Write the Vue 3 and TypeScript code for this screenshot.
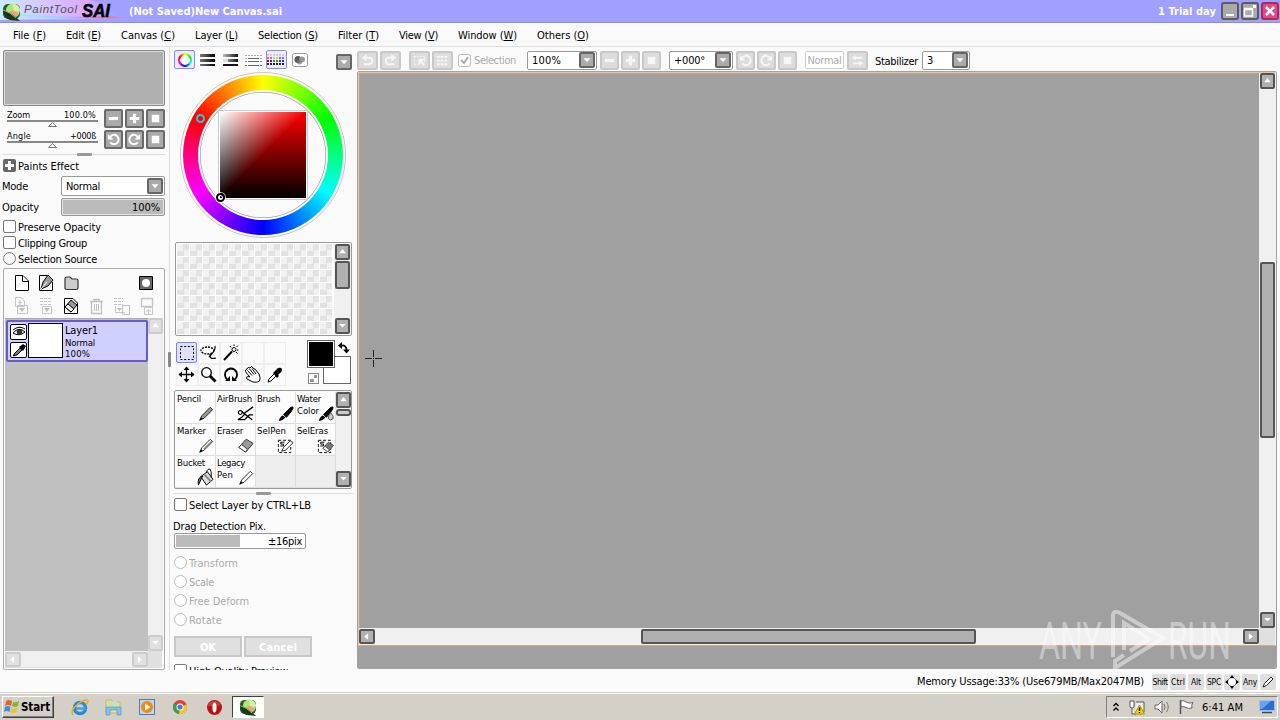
<script setup lang="ts">
import type { Directive } from 'vue'

// Spreads or tightens a label so it takes exactly the given number of pixels.
const vFit: Directive<HTMLElement, number> = {
  mounted(el, binding) {
    const natural = el.getBoundingClientRect().width
    const count = (el.textContent ?? '').length
    if (count > 0 && natural > 0) {
      el.style.letterSpacing = `${(binding.value - natural) / count}px`
    }
  },
}

interface MenuItem { name: string; key: string; w: number }
const menus: MenuItem[] = [
  { name: 'File', key: 'F', w: 33 },
  { name: 'Edit', key: 'E', w: 35 },
  { name: 'Canvas', key: 'C', w: 54 },
  { name: 'Layer', key: 'L', w: 43 },
  { name: 'Selection', key: 'S', w: 60 },
  { name: 'Filter', key: 'T', w: 41 },
  { name: 'View', key: 'V', w: 39 },
  { name: 'Window', key: 'W', w: 59 },
  { name: 'Others', key: 'O', w: 52 },
]

const g = (d: string, extra = '') => `<path d="${d}" fill="none" stroke="currentColor" ${extra}/>`
const f = (d: string, extra = 'fill="currentColor"') => `<path d="${d}" ${extra}/>`

const up = f('M8 5L12 10H4Z')
const down = f('M4 6H12L8 10.500Z')
const left = f('M10 4V12L5 8Z')
const right = f('M6 4V12L11 8Z')
const minus = f('M3 6.300H13V9.700H3Z')
const plus = f('M6.300 3H9.700V6.300H13V9.700H9.700V13H6.300V9.700H3V6.300H6.300Z')
const square = f('M4 4H12V12H4Z')
const ccw = g('M4.5 5A5 5 0 1 1 4.5 11', 'stroke-width="2"') + f('M2 2V8H8Z')
const cw = g('M11.5 5A5 5 0 1 0 11.5 11', 'stroke-width="2"') + f('M14 2V8H8Z')
const undo = g('M6 5H10Q13 5 13 8.500Q13 12 9 12H4', 'stroke-width="2"') + f('M2 5L7 1V9Z')
const redo = g('M10 5H6Q3 5 3 8.500Q3 12 7 12H12', 'stroke-width="2"') + f('M14 5L9 1V9Z')
const deselect = g('M2.500 3.500H13.500V11M2.500 3.500V12.500H8', 'stroke-dasharray="2 1"') + g('M8 7L13 13M8 12V7H13', 'stroke-width="2"')
const hideSel = g('M2 4H14M2 8H14M2 12H14', 'stroke-width="2" stroke-dasharray="3 1"')
const flip = g('M3 5H13M3 11H13', 'stroke-width="2"') + f('M2 5L6 2V8ZM14 11L10 8V14Z')

const navRows = [
  { label: 'Zoom', value: '100.0%', lw: 23, vw: 32, icons: [minus, plus, square] },
  { label: 'Angle', value: '+000ß', lw: 24, vw: 26, icons: [ccw, cw, square] },
]

const page = '<path d="M4.500 2.500H12L17.500 8V17.500H4.500Z" fill="#fff" stroke="#000"/><path d="M11.500 3V8.500H17" fill="#fff" stroke="#000"/>'
const penPage = '<path d="M3.500 2.500H11M16.500 9V17.500H3.500V2.500" fill="none" stroke="#000"/><path d="M5 16L7 9L12 2L17 7L12 13Z" fill="#999" stroke="#000"/><path d="M5 16L11 9" stroke="#fff"/>'
const folder = '<path d="M4 6Q4 4 6 4H9L11 6H15Q17 6 17 8V15Q17 16.500 15 16.500H6Q4 16.500 4 15Z" fill="#ccc" stroke="#333" stroke-width="1.200"/>'
const mask = '<path d="M3.500 3.500H16.500V16.500H3.500Z" fill="#666" stroke="#000"/><circle cx="10" cy="10" r="4" fill="#fff"/>'
const eraseLayer = '<path d="M3.500 2.500H12L16.500 7V17.500H3.500Z" fill="#fff" stroke="#000"/><path d="M4 11L10 4L16 9L10 16Z" fill="#999" stroke="#000"/><path d="M4 11L7 8L13 13L10 16Z" fill="#eee" stroke="#000"/>'
const move1 = '<g fill="none" stroke="#c5c5c5"><path d="M4.500 1.500H10L13.500 5V10.500H4.500Z"/><path d="M7 6.500H11M9 4V9"/><path d="M6.500 9.500H16.500V17.500H6.500Z"/></g><path d="M8 12H14L11 16Z" fill="#bbb"/>'
const move2 = '<g fill="none" stroke="#c5c5c5"><path d="M4 2.500H15M4 5.500H15M4 8.500H15" stroke-dasharray="3 1"/><path d="M6.500 10.500H15.500V17.500H6.500Z"/></g><path d="M8 12H14L11 16Z" fill="#bbb"/>'
const trash = '<g fill="none" stroke="#c0c0c0"><path d="M4 5.500H17M8 5V3.500H13V5M5.500 6V17.500H15.500V6" stroke-width="1.300"/><path d="M8.500 8V15M10.500 8V15M12.500 8V15"/></g>'
const merge = '<g fill="none" stroke="#c5c5c5"><path d="M3 2.500H12M3 5.500H12M3 8.500H12" stroke-dasharray="3 1"/><path d="M4.500 10V16.500H14M11.500 9.500H18.500V18.500H11.500Z"/></g><path d="M6 12H11L8.500 15Z" fill="#bbb"/>'
const apply = '<g fill="none" stroke="#c5c5c5"><path d="M5.500 2.500H16.500V10.500H5.500Z" stroke-width="1.400"/><path d="M8.500 11.500H16.500V18.500H8.500ZM10 15H15M12.500 13V18"/></g>'
const layerTools = [page, penPage, folder, '', '', mask, move1, move2, eraseLayer, trash, merge, apply]

const tabs = [
  { on: true, icon: '' },
  { on: false, icon: '<linearGradient id="ta"><stop stop-color="#777"/><stop offset="1" stop-color="#000"/></linearGradient><path d="M3 4H18V7H3ZM3 9H18V12H3ZM3 14H18V16H3Z" fill="url(#ta)"/>' },
  { on: false, icon: '<linearGradient id="tb"><stop stop-color="#bbb"/><stop offset="1" stop-color="#111"/></linearGradient><path d="M3 4H18V7H3ZM8 9H18V12H8Z" fill="url(#tb)"/><path d="M3 9H8V12H3Z" fill="#ddd"/><path d="M3 14H18V16H3Z" fill="#111"/>' },
  { on: false, icon: '<g stroke="#777" stroke-dasharray="2 1"><path d="M2 5.500H19M2 8.500H19" stroke="#aaa"/><path d="M2 11.500H19M2 15.500H19"/></g><path d="M5 8.500H16M5 11.500H16M5 15.500H16" stroke="#666"/>' },
  { on: true, icon: '<g stroke-width="2" stroke-dasharray="2 1" transform="translate(1 1)"><path d="M0 4H18" stroke="#dbc5df"/><path d="M0 7H6" stroke="#d66"/><path d="M6 7H12" stroke="#ad7"/><path d="M12 7H18" stroke="#86f"/><path d="M0 10H6" stroke="#a04"/><path d="M6 10H12" stroke="#393"/><path d="M12 10H18" stroke="#24b"/><path d="M0 13H18" stroke="#222"/></g>' },
  { on: false, icon: '<rect x="3.500" y="3.500" width="15" height="13" rx="2" fill="#fff" stroke="#999"/><circle cx="9" cy="9.500" r="3.500" fill="#555"/><circle cx="13" cy="9.500" r="3" fill="#999"/><circle cx="10.500" cy="12" r="2.500" fill="#777" opacity=".7"/>' },
]

const tools = [
  { on: true, icon: '<rect x="4.500" y="4.500" width="13" height="13" fill="none" stroke="#000" stroke-dasharray="2 1.700"/>' },
  { on: false, icon: '<ellipse cx="9.500" cy="8.500" rx="6.500" ry="3.500" fill="none" stroke="#000" stroke-width="1.300" stroke-dasharray="2 1"/><path d="M17 4Q18 7 13 13L11 15M12 12Q11 18 18 16" fill="none" stroke="#000" stroke-width="1.200"/>' },
  { on: false, icon: '<path d="M4 18L12 9.500" stroke="#000" stroke-width="2"/><circle cx="14" cy="7.500" r="2" fill="#fff" stroke="#000"/><path d="M14 2.500V4M18 3.500L16.500 5M17 8H18.500M16 10L17.500 11.500M10 4L11 5.500" stroke="#000"/>' },
  { on: false, icon: '' },
  { on: false, icon: '' },
  { on: false, icon: '<path d="M10.500 3V18M3 10.500H18" stroke="#000" stroke-width="1.300"/><path d="M10.500 2.500L13.500 6H7.500ZM10.500 18.500L7.500 15H13.500ZM2.500 10.500L6 7.500V13.500ZM18.500 10.500L15 7.500V13.500Z"/>' },
  { on: false, icon: '<circle cx="8.500" cy="8.500" r="4.800" fill="#fff" stroke="#000" stroke-width="1.300"/><path d="M12 12L17.500 17.500" stroke="#000" stroke-width="2.800"/>' },
  { on: false, icon: '<path d="M7 15.500Q4 12 5.500 8Q7.500 4.500 11 4.500Q14.500 4.500 16.500 8Q18 12 15 15.500" fill="none" stroke="#000" stroke-width="1.800"/><path d="M5 17H10V12ZM17 17H12V12Z"/>' },
  { on: false, icon: '<path d="M3.500 6L5 5L6 3.500L8 4L9.500 2.500L11.500 4.500L13 5L17 10Q19 14 17.500 17Q15 19 11 18L5 15Q3 13 6 12.500L8 13L4.500 9Q3 7 3.500 6Z" fill="#fff" stroke="#000"/><path d="M5.500 6.500L10 11.500M7.500 5L12 10.500M10 4.500L14 10" stroke="#000"/>' },
  { on: false, icon: '<path d="M4 18L5 15L11 9L13 11L7 17Z" fill="#fff" stroke="#000"/><path d="M10 8L14 4Q17 3 18 5Q18 8 16 9L14 11L15 12L13 14L9 9L10 8Z"/>' },
]

const pen = (fill: string) => `<path d="M4 17L6 12.500L15 3.500L17.500 6L8.500 15Z" fill="${fill}" stroke="#222"/><path d="M3.500 17.500L7 15.500L5.500 14Z"/>`
const brushIcon = '<path d="M8 11L15 4Q18 2 18 4Q18 6 11 14Z" stroke="#000"/><path d="M3 18Q4 13 7 12L10 14Q8 17 3 18Z"/>'
const eraser = (fill: string) => `<path d="M3 12L10 4Q11 3 12 4L18 8L11 16Q10 17 9 16Z" fill="${fill}" stroke="#333"/><path d="M3 12L6 9L12 14L10 17Z" fill="#fff" stroke="#333"/>`
const dashBox = '<rect x="2.500" y="4.500" width="13" height="13" fill="none" stroke="#000" stroke-dasharray="3 2"/><path d="M9 6.500H5V8.500H8V10.500H4.500" fill="none" stroke="#000"/>'
const brushes = [
  { name: 'Pencil', lines: [{ t: 'Pencil', w: 24 }], icon: pen('#999') },
  { name: 'AirBrush', lines: [{ t: 'AirBrush', w: 35 }], icon: '<path d="M9 9.500L18 3M6 8L17 16.500M9 11Q6 15 2 16.500H9L14 11.500H18" fill="none" stroke="#000" stroke-width="1.400"/><circle cx="4.500" cy="9" r="2" fill="#fff" stroke="#000" stroke-width="1.200"/>' },
  { name: 'Brush', lines: [{ t: 'Brush', w: 23 }], icon: brushIcon },
  { name: 'Water', lines: [{ t: 'Water', w: 24 }, { t: 'Color', w: 22 }], icon: brushIcon + '<path d="M15.500 9Q19 13 18 15.500Q15.500 18 13 15.500Q12.500 13 15.500 9Z" fill="#ccc" stroke="#555"/>' },
  { name: 'Marker', lines: [{ t: 'Marker', w: 29 }], icon: pen('#fff') + '<path d="M8 14L16.500 5.500" stroke="#888" stroke-width="1.300"/>' },
  { name: 'Eraser', lines: [{ t: 'Eraser', w: 26 }], icon: eraser('#999') },
  { name: 'SelPen', lines: [{ t: 'SelPen', w: 29 }], icon: dashBox + '<path d="M6 16L8 12L15 5L18 7L10 15Z" fill="#fff" stroke="#222"/>' },
  { name: 'SelEras', lines: [{ t: 'SelEras', w: 31 }], icon: dashBox + '<g transform="translate(5 4) scale(.75)">' + eraser('#777') + '</g>' },
  { name: 'Bucket', lines: [{ t: 'Bucket', w: 28 }], icon: '<path d="M5 9L12 4L18 12L11 18Z" fill="#ddd" stroke="#000"/><path d="M9 7L15.500 14" stroke="#888" stroke-width="2"/><path d="M7 8.500Q1 10 2.500 18L6 10.500Z" fill="#777" stroke="#000"/><path d="M11 5Q12 0 15 1.500Q16.500 3 16 10" fill="none" stroke="#000"/>' },
  { name: 'Legacy', lines: [{ t: 'Legacy', w: 28 }, { t: 'Pen', w: 16 }], icon: pen('#fff') },
  { name: 'e1', lines: [], icon: '' },
  { name: 'e2', lines: [], icon: '' },
]

const checks = [
  { t: 'Preserve Opacity', w: 83, round: false },
  { t: 'Clipping Group', w: 69, round: false },
  { t: 'Selection Source', w: 79, round: true },
]
const radios = [
  { t: 'Transform', w: 49 },
  { t: 'Scale', w: 25 },
  { t: 'Free Deform', w: 60 },
  { t: 'Rotate', w: 33 },
]
const keys = [{ t: 'Shift', w: 15 }, { t: 'Ctrl', w: 14 }, { t: 'Alt', w: 10 }, { t: 'SPC', w: 14 }]

const logo = '<rect x="1" y="2" width="17" height="15" rx="5" fill="#2c5a2c"/><circle cx="11" cy="8.500" r="7" fill="#a8e878"/><path d="M11 2A7 7 0 0 1 18 9L11 9Z" fill="#d8f0a0"/><path d="M5 12A7 7 0 0 0 17 12L11 8Z" fill="#f0a080"/><path d="M1 8Q9 10 18 19L8 18Q2 16 1 8Z" fill="#143c14"/><path d="M1 8Q8 10 14 16" stroke="#9b6" fill="none"/>'
const launch = [
  { id: 'ie', icon: '<circle cx="10" cy="11" r="5.500" fill="none" stroke="#2b8ad8" stroke-width="3.500"/><path d="M6 11.500H16" stroke="#3aa4ee" stroke-width="2.500"/><path d="M3 18Q0 13 8 7Q16 1 18 4Q18 6 16 8" fill="none" stroke="#e8b020" stroke-width="1.500"/>' },
  { id: 'explorer', icon: '<path d="M3 3H9L10 5H17V16H3Z" fill="#f4dc80" stroke="#c8a850" stroke-width=".7"/><path d="M5 4H14V9H5Z" fill="#bfe3c0"/><path d="M3 10H18V18H14V13H7V18H3Z" fill="#7cc4ee" stroke="#5a9ac8" stroke-width=".7"/>' },
  { id: 'player', icon: '<rect x="2.500" y="2.500" width="15" height="15" fill="#b8d8f4" stroke="#4a80b8"/><circle cx="10" cy="10" r="6" fill="#f08a10"/><path d="M8 6.500L13.500 10L8 13.500Z" fill="#fff"/>' },
  { id: 'chrome', icon: '<circle cx="10" cy="10" r="7" fill="#e04030"/><path d="M10 10L3.900 6.500A7 7 0 0 0 9 17Z" fill="#3aa050"/><path d="M10 10L16.500 7.500A7 7 0 0 1 9 17Z" fill="#f6c820"/><circle cx="10" cy="10" r="3.500" fill="#fff"/><circle cx="10" cy="10" r="2.600" fill="#3f7ee0"/>' },
  { id: 'opera', icon: '<circle cx="10.500" cy="10.500" r="7.500" fill="#b81414"/><path d="M4 7Q10 1 17 7Q15 10 4 9Z" fill="#e05050" opacity=".6"/><ellipse cx="10.500" cy="10.500" rx="2" ry="5" fill="#fff"/>' },
]
</script>

<template>
  <div class="app">
    <header class="titlebar">
      <svg class="brand" viewBox="0 0 126 22" width="126" height="22">
        <defs>
          <linearGradient id="rb" x1="0" x2="1"><stop offset="0" stop-color="#7fd" /><stop offset=".35" stop-color="#8df" /><stop offset=".6" stop-color="#c8f" /><stop offset=".85" stop-color="#f66" /><stop offset="1" stop-color="#f88" stop-opacity="0" /></linearGradient>
          <linearGradient id="glow" x1="0" x2="1"><stop offset="0" stop-color="#dff" /><stop offset=".7" stop-color="#eaf" /><stop offset="1" stop-color="#a0a0ff" stop-opacity="0" /></linearGradient>
        </defs>
        <path d="M0 0H88Q112 2 112 12L126 17L90 19L0 20Z" fill="url(#glow)" opacity=".75" />
        <path d="M20 15Q60 19 124 16.500" fill="none" stroke="url(#rb)" stroke-width="1.500" />
        <g transform="translate(2 2)" v-html="logo" />
        <text class="lg1" x="24" y="13" textLength="53">PaintTool</text>
        <text class="lg2" x="82" y="17" textLength="28" lengthAdjust="spacingAndGlyphs">SAI</text>
      </svg>
      <span class="doc"><span v-fit="153">(Not Saved)New Canvas.sai</span></span>
      <span class="trial"><span v-fit="58">1 Trial day</span></span>
      <span class="win"><svg viewBox="0 0 18 18"><path d="M5 13H13" stroke="#fff" stroke-width="2" /></svg></span>
      <span class="win"><svg viewBox="0 0 18 18"><path d="M3.500 7.500H11.500V14H3.500ZM3 6.500H12" fill="none" stroke="#fff" stroke-width="1.500" /><path d="M12 3H15V6H12Z" fill="#fff" /></svg></span>
      <span class="win close"><svg viewBox="0 0 18 18"><path d="M5 5L13 13M13 5L5 13" stroke="#fff" stroke-width="2.600" /></svg></span>
    </header>

    <nav class="menu">
      <span v-for="m in menus" :key="m.name" class="mi" :style="{ width: m.w + 'px' }"><span v-fit="m.w">{{ m.name }} (<u>{{ m.key }}</u>)</span></span>
    </nav>

    <main class="work">
      <aside class="left">
        <div class="navigator" />
        <div v-for="(r, ri) in navRows" :key="r.label" class="navrow" :class="{ first: ri === 0 }">
          <div class="track">
            <div class="tl"><span v-fit="r.lw">{{ r.label }}</span><span v-fit="r.vw">{{ r.value }}</span></div>
            <svg width="91" height="7" viewBox="0 0 91 7"><path d="M0 1H91" stroke="#888" stroke-width="2" /><path d="M45.500 2.500L49.500 6.500H41.500Z" fill="#fff" stroke="#777" /></svg>
          </div>
          <span v-for="(ic, i) in r.icons" :key="i" class="gbtn"><svg viewBox="0 0 16 16" v-html="ic" /></span>
        </div>
        <div class="grip"><i /></div>
        <div class="paints"><svg width="13" height="13" viewBox="0 0 13 13"><rect width="13" height="13" rx="2" fill="#666" /><path d="M5 2H8V5H11V8H8V11H5V8H2V5H5Z" fill="#fff" /></svg><span v-fit="61">Paints Effect</span></div>
        <div class="field mode"><span class="fl"><span v-fit="26">Mode</span></span><div class="combo"><span v-fit="34">Normal</span><span class="dd"><svg viewBox="0 0 16 16" v-html="down" /></span></div></div>
        <div class="field opac"><span class="fl"><span v-fit="37">Opacity</span></span><div class="meter"><span v-fit="28">100%</span></div></div>
        <div class="checks">
          <div v-for="c in checks" :key="c.t" class="check"><i :class="{ round: c.round }" /><span v-fit="c.w">{{ c.t }}</span></div>
        </div>

        <section class="layers">
          <div class="ltools"><svg v-for="(ic, i) in layerTools" :key="i" viewBox="0 0 20 20" width="20" height="20" v-html="ic" /></div>
          <div class="lbody">
            <div class="llist">
              <div class="layer">
                <div class="lbtns">
                  <span><svg viewBox="0 0 16 14" width="16" height="14"><path d="M2 8Q8 1 14 7Q8 12 2 8Z" fill="#fff" stroke="#000" /><circle cx="8.500" cy="7" r="2.800" fill="#333" /><path d="M2 5Q8 0 14 4" stroke="#000" fill="none" /></svg></span>
                  <span><svg viewBox="0 0 16 14" width="16" height="14"><path d="M2 13L4 10L9 5L11 7L6 12Z" stroke="#000" fill="#777" /><path d="M8 4L12 1L15 3L12 8Z" /></svg></span>
                </div>
                <div class="thumb" />
                <div class="linfo"><span v-fit="33">Layer1</span><span v-fit="30" class="sm">Normal</span><span v-fit="25" class="sm">100%</span></div>
              </div>
            </div>
            <div class="vbar off"><span class="sbtn"><svg viewBox="0 0 16 16" v-html="up" /></span><b class="fill" /><span class="sbtn"><svg viewBox="0 0 16 16" v-html="down" /></span></div>
          </div>
          <div class="lfoot">
            <div class="hbar off"><span class="sbtn"><svg viewBox="0 0 16 16" v-html="left" /></span><b class="fill" /><span class="sbtn"><svg viewBox="0 0 16 16" v-html="right" /></span></div>
          </div>
        </section>
        <i class="split" />
      </aside>

      <section class="mid">
        <div class="tabs">
          <span v-for="(t, i) in tabs" :key="i" class="tab" :class="{ on: t.on }"><b v-if="i === 0" class="mini" /><svg v-else viewBox="0 0 21 20" width="21" height="20" v-html="t.icon" /></span>
          <span class="dd tdd"><svg viewBox="0 0 16 16" v-html="down" /></span>
        </div>
        <div class="wheelbox">
          <div class="wheel"><div class="ring"><div class="hole"><div class="sv" /></div></div>
            <i class="hue" /><i class="pick" />
          </div>
        </div>
        <div class="swatches">
          <div class="grid" />
          <div class="vbar"><span class="sbtn"><svg viewBox="0 0 16 16" v-html="up" /></span><b class="th swth" /><b class="fill" /><span class="sbtn"><svg viewBox="0 0 16 16" v-html="down" /></span></div>
        </div>
        <div class="toolrow">
          <div class="tools"><span v-for="(t, i) in tools" :key="i" :class="{ on: t.on }"><svg viewBox="0 0 22 22" width="22" height="22" v-html="t.icon" /></span></div>
          <div class="colors">
            <i class="bg" /><i class="fg" />
            <svg class="swap" width="12" height="12" viewBox="0 0 12 12"><path d="M3 3.500Q8.500 3 8.500 8" fill="none" stroke="#000" stroke-width="1.800" /><path d="M0 3.500L4 0V7ZM5 7.500H12L8.500 11.500Z" /></svg>
            <svg class="trans" width="12" height="12" viewBox="0 0 12 12"><rect x=".5" y=".5" width="10" height="10" fill="#fff" stroke="#888" /><path d="M6 2H9V5H6ZM2 6H6V9H2Z" fill="#999" /></svg>
          </div>
        </div>
        <div class="brushes">
          <div class="bgrid">
            <div v-for="b in brushes" :key="b.name" class="brush" :class="{ none: !b.lines.length }">
              <div v-for="l in b.lines" :key="l.t" class="bl"><span v-fit="l.w">{{ l.t }}</span></div>
              <svg viewBox="0 0 20 20" width="19" height="19" v-html="b.icon" />
            </div>
          </div>
          <div class="vbar"><span class="sbtn"><svg viewBox="0 0 16 16" v-html="up" /></span><b class="th brth" /><b class="fill" /><span class="sbtn"><svg viewBox="0 0 16 16" v-html="down" /></span></div>
        </div>
        <div class="grip g2"><i /></div>
        <div class="opts">
          <div class="check big"><i /><span v-fit="122">Select Layer by CTRL+LB</span></div>
          <div class="dlabel"><span v-fit="93">Drag Detection Pix.</span></div>
          <div class="drag"><b /><span v-fit="34">±16pix</span></div>
          <div v-for="r in radios" :key="r.t" class="check radio"><i class="round" /><span v-fit="r.w">{{ r.t }}</span></div>
          <div class="okrow"><span><em v-fit="16">OK</em></span><span><em v-fit="38">Cancel</em></span></div>
          <div class="check hq"><i /><span v-fit="99">High Quality Preview</span></div>
        </div>
      </section>

      <section class="right">
        <div class="bar">
          <span class="gbtn dis w21"><svg viewBox="0 0 16 16" v-html="undo" /></span>
          <span class="gbtn dis w21 m2"><svg viewBox="0 0 16 16" v-html="redo" /></span>
          <span class="gbtn dis w21 m8"><svg viewBox="0 0 16 16" v-html="deselect" /></span>
          <span class="gbtn dis w21 m2"><svg viewBox="0 0 16 16" v-html="hideSel" /></span>
          <span class="selchk"><svg width="13" height="13" viewBox="0 0 13 13"><rect x=".5" y=".5" width="12" height="12" rx="2" fill="#fff" stroke="#bbb" /><path d="M3 6L6 9L10 3" fill="none" stroke="#aaa" stroke-width="2" /></svg><span v-fit="42">Selection</span></span>
          <div class="combo c1"><span v-fit="29">100%</span><span class="dd"><svg viewBox="0 0 16 16" v-html="down" /></span></div>
          <span class="gbtn dis m3"><svg viewBox="0 0 16 16" v-html="minus" /></span>
          <span class="gbtn dis m2"><svg viewBox="0 0 16 16" v-html="plus" /></span>
          <span class="gbtn dis m2"><svg viewBox="0 0 16 16" v-html="square" /></span>
          <div class="combo c2"><span v-fit="31">+000°</span><span class="dd"><svg viewBox="0 0 16 16" v-html="down" /></span></div>
          <span class="gbtn dis m3"><svg viewBox="0 0 16 16" v-html="ccw" /></span>
          <span class="gbtn dis m2"><svg viewBox="0 0 16 16" v-html="cw" /></span>
          <span class="gbtn dis m2"><svg viewBox="0 0 16 16" v-html="square" /></span>
          <span class="normal"><span v-fit="34">Normal</span></span>
          <span class="gbtn dis w21 m3"><svg viewBox="0 0 16 16" v-html="flip" /></span>
          <span class="stab"><span v-fit="43">Stabilizer</span></span>
          <div class="combo c3"><span>3</span><span class="dd"><svg viewBox="0 0 16 16" v-html="down" /></span></div>
        </div>
        <div class="frame">
          <div class="view">
            <div class="canvas">
              <svg class="cross" width="17" height="17" viewBox="0 0 17 17"><path d="M8.500 0V7M8.500 10V17M0 8.500H7M10 8.500H17" stroke="#222" /><path d="M8 8H9V9H8Z" /></svg>
            </div>
            <div class="vbar big"><span class="sbtn"><svg viewBox="0 0 16 16" v-html="up" /></span><b class="sp1" /><b class="th vth" /><b class="fill" /><span class="sbtn"><svg viewBox="0 0 16 16" v-html="down" /></span></div>
            <div class="hbar big"><span class="sbtn"><svg viewBox="0 0 16 16" v-html="left" /></span><b class="sp2" /><b class="th hth" /><b class="fill" /><span class="sbtn"><svg viewBox="0 0 16 16" v-html="right" /></span></div>
            <div class="corner" />
          </div>
          <div class="dock" />
        </div>
      </section>
    </main>

    <footer class="status">
      <span class="mem"><span v-fit="227">Memory Ussage:33% (Use679MB/Max2047MB)</span></span>
      <span v-for="k in keys" :key="k.t" class="key"><span v-fit="k.w">{{ k.t }}</span></span>
      <span class="key"><svg width="16" height="16" viewBox="0 0 16 16"><path d="M8 1L11 5H5ZM8 15L5 11H11ZM1 8L5 5V11ZM15 8L11 5V11Z" /><circle cx="8" cy="8" r="4" fill="#fff" /></svg></span>
      <span class="key"><span v-fit="14">Any</span></span>
      <span class="key"><svg width="16" height="16" viewBox="0 0 16 16"><path d="M3 13L4.500 9.500L11 3L13 5L6.500 11.500Z" fill="#fff" stroke="#222" /></svg></span>
    </footer>

    <footer class="taskbar">
      <button class="start"><svg width="16" height="16" viewBox="0 0 16 16"><path d="M2 2Q5 0 8 2L7 7Q4 5 1 7Z" fill="#e8602c" /><path d="M9 3Q12 4 15 2L14 7Q11 9 8 7Z" fill="#7cb838" /><path d="M1 8Q4 6 6.500 8L5.500 13Q3 11 0 13Z" fill="#3c8ee0" /><path d="M7.500 9Q10 10 13.500 8.500L12.500 13Q9 15 6.500 13Z" fill="#f4c030" /></svg><span v-fit="29">Start</span></button>
      <span v-for="l in launch" :key="l.id" class="ql"><svg width="20" height="20" viewBox="0 0 20 20" v-html="l.icon" /></span>
      <span class="task"><svg width="18" height="18" viewBox="0 0 19 19" v-html="logo" /></span>
      <div class="tray">
        <svg width="8" height="12" viewBox="0 0 8 12"><path d="M1.500 5L4 2.500L6.500 5M1.500 9.500L4 7L6.500 9.500" fill="none" stroke="#000" stroke-width="1.300" /></svg>
        <svg class="t2" width="18" height="18" viewBox="0 0 18 18"><path d="M2 3H6V8Q6 10 4 10Q2 10 2 8ZM4 10V16H8" fill="#fff" stroke="#555" /><path d="M8 4H16V14H7" fill="#eee" stroke="#555" /><path d="M11.500 7L16.500 16H6.500Z" fill="#f8d800" stroke="#b09000" /><path d="M11.500 9.500V13M11.500 14V15" stroke="#000" stroke-width="1.400" /></svg>
        <svg class="t3" width="18" height="16" viewBox="0 0 18 16"><path d="M2 6H5L9 2V14L5 10H2Z" fill="#fff" stroke="#666" /><path d="M11 5Q13 8 11 11M13.500 3Q17 8 13.500 13" fill="none" stroke="#777" /></svg>
        <svg class="t4" width="18" height="16" viewBox="0 0 18 16"><path d="M3.500 1V15" stroke="#555" stroke-width="1.500" /><path d="M4 2Q7 1 9 3Q12 5 16 3.500Q14 6 15 9Q11 10 9 8.500Q6 7 4 8Z" fill="#fff" stroke="#666" /></svg>
        <span class="clock"><span v-fit="41">6:41 AM</span></span>
        <svg class="t5" width="16" height="14" viewBox="0 0 16 14"><rect x=".5" y=".5" width="15" height="10" fill="#2c6cd0" stroke="#9cc0f0" /><path d="M1 1H12L3 9H1Z" fill="#68a4f0" /><path d="M3 12.500H13" stroke="#445" stroke-width="1.500" /></svg>
      </div>
    </footer>

    <svg class="watermark" width="200" height="66" viewBox="0 0 200 66">
      <g fill="#fff" fill-opacity=".42">
        <text x="2" y="52" textLength="63" lengthAdjust="spacingAndGlyphs">ANY</text>
        <text x="131" y="52" textLength="63" lengthAdjust="spacingAndGlyphs">RUN</text>
      </g>
      <g fill="none" stroke="#fff" stroke-opacity=".45" stroke-width="4">
        <path d="M76 50V8Q77 3 83 6L126 31L78 61V54L87 48" />
        <path d="M87 43V16L112 32L93 44" />
      </g>
    </svg>
  </div>
</template>

<style>
body { background: #fafafa; overflow: hidden; }
</style>

<style scoped>
* { box-sizing: border-box; }
.app { width: 1280px; height: 720px; position: relative; display: flex; flex-direction: column; background: #fafafa; color: #000; font-family: "DejaVu Sans Condensed", "DejaVu Sans", sans-serif; font-stretch: condensed; font-size: 11px; line-height: 14px; white-space: nowrap; overflow: hidden; }
i, b { display: block; flex: none; }
svg { display: block; flex: none; }
span > svg { overflow: visible; }
span { display: inline-block; flex: none; }

.titlebar { height: 23px; flex: none; background: #a0a0ff; border-bottom: 1px solid #8c8cd8; display: flex; align-items: center; color: #fff; font-weight: bold; }
.lg1 { font: italic 11.500px "Liberation Sans", sans-serif; fill: #555; }
.lg2 { font: italic bold 19px "Liberation Sans", sans-serif; fill: #000; stroke: #000; stroke-width: .6; }
.doc { margin-left: 3px; width: 154px; padding-top: 2px; }
.trial { margin-left: auto; width: 58px; padding-top: 2px; }
.win { width: 18px; height: 18px; margin-left: 2px; border: 2px solid #5c5c5c; border-radius: 3px; background: #aaa; }
.trial + .win { margin-left: 5px; }
.win svg { margin: -2px; width: 18px; height: 18px; }
.win.close { background: #e84880; border-color: #a03058; margin-right: 1px; }

.menu { height: 24px; flex: none; padding: 2px 13px 0; display: flex; gap: 20px; align-items: center; border-bottom: 1px solid #e0e0e0; background: linear-gradient(#fafafa 18px, #f2f2f2 18px, #f2f2f2 19px, #fafafa 19px); }
.work { height: 623px; flex: none; display: grid; grid-template-columns: 170px 187px 923px; overflow: hidden; }

.left { border-right: 1px solid #ddd; padding-left: 3px; position: relative; }
.navigator { margin-top: 3px; width: 162px; height: 56px; background: #b0b0b0; border: 1px solid #888; border-radius: 2px; box-shadow: inset 0 0 0 1px #d8d8d8; }
.navrow { display: flex; height: 21px; padding-left: 4px; align-items: center; gap: 2px; }
.navrow.first { margin-top: 2px; }
.track { width: 91px; height: 21px; margin-right: 4px; padding-top: 1px; }
.tl { display: flex; justify-content: space-between; font-size: 9px; line-height: 12px; height: 11px; padding-right: 2px; }
.gbtn { width: 19px; height: 19px; border: 2px solid #6a6a6a; border-radius: 2px; background: #aaa; color: #fff; display: grid; place-items: center; }
.gbtn svg { width: 15px; height: 15px; }
.gbtn.dis { border-color: #c8c8c8; background: #dcdcdc; color: #f6f6f6; }
.gbtn.w21 { width: 21px; }
.grip { height: 8px; width: 162px; display: grid; place-items: center; background: linear-gradient(#0000 4px, #ddd 4px, #ddd 5px, #0000 5px); }
.grip i { width: 15px; height: 3px; border-radius: 1px; background: #999; }
.paints { height: 16px; display: flex; align-items: center; gap: 2px; }
.paints span { padding-top: 2px; }
.paints svg { margin-top: -1px; }
.field { display: flex; align-items: center; margin-left: -1px; }
.mode { height: 23px; }
.opac { height: 20px; }
.fl { width: 59px; padding-top: 2px; }
.combo { width: 104px; height: 20px; border: 1px solid #999; border-radius: 2px; background: #fff; display: flex; align-items: center; justify-content: space-between; padding: 0 1px 0 4px; }
.combo > span:first-child { padding-top: 2px; }
.dd { width: 16px; height: 16px; border: 2px solid #666; border-radius: 2px; background: #aaa; color: #fff; }
.dd svg { width: 14px; height: 14px; margin: -1px; }
.meter { width: 104px; height: 18px; border: 1px solid #999; border-radius: 2px; background: #bbb; box-shadow: inset 0 0 0 1px #e4e4e4; text-align: right; padding: 2px 4px 0 0; }
.checks { margin-top: 2px; }
.check { height: 16px; display: flex; align-items: center; gap: 2px; }
.check span { padding-top: 2px; }
.check i { width: 13px; height: 13px; border: 1px solid #777; border-radius: 2px; background: #fff; margin-top: -1px; }
.check i.round { border-radius: 50%; }
.split { position: absolute; left: 168px; top: 305px; width: 3px; height: 15px; background: #888; border-radius: 1px; }

.layers { width: 162px; height: 402px; margin-top: 1px; border: 1px solid #aaa; border-radius: 2px; padding: 0 1px; background: #fafafa; }
.ltools { height: 49px; padding: 2px 0 0 4px; display: grid; grid-template-columns: repeat(6, 25px); grid-auto-rows: 23.500px; align-items: center; }
.ltools svg { margin-left: 2px; }
.lbody { display: flex; height: 333px; }
.llist { width: 143px; background: #c0c0c0; padding: 1px 0 0 1px; border-top: 1px solid #aaa; }
.layer { height: 42px; border: 2px solid #6a5acd; border-radius: 2px; background: #d0d0ff; display: flex; padding: 1px 0 0 2px; }
.lbtns { display: flex; flex-direction: column; gap: 2px; padding-top: 1px; }
.lbtns span { width: 17px; height: 16px; border: 1px solid #000; border-radius: 2px; background: #fff; }
.thumb { width: 35px; height: 35px; border: 1px solid #000; background: #fff; margin-left: 1px; }
.linfo { padding: 2px 0 0 2px; display: flex; flex-direction: column; align-items: flex-start; line-height: 12px; }
.linfo .sm { font-size: 9.500px; line-height: 11px; }

.vbar { width: 17px; background: #f0f0f0; display: flex; flex-direction: column; align-items: center; }
.hbar { height: 17px; background: #f0f0f0; display: flex; align-items: center; }
.fill { flex: 1; }
.sbtn { width: 15px; height: 16px; border: 2px solid #555; border-radius: 2px; background: #b0b0b0; color: #fff; }
.sbtn svg { width: 13px; height: 13px; margin: -1px; }
.th { background: #b0b0b0; border: 2px solid #555; border-radius: 2px; }
.off .sbtn { border-color: #ccc; background: #e0e0e0; }
.hbar .sbtn { width: 16px; height: 15px; }
.layers .vbar { width: 15px; }
.lfoot { background: #e0e0e0; margin-right: 1px; height: 17px; }
.layers .hbar { width: 143px; height: 16px; }

.mid { padding-left: 3px; overflow: hidden; }
.tabs { margin-top: 2px; height: 21px; display: flex; align-items: center; }
.tab { width: 23px; height: 21px; padding: 0; display: flex; justify-content: center; align-items: center; border: 1px solid #0000; }
.tab:first-child, .tab.on { width: 21px; margin: 0 1px; height: 19px; border: 1px solid #8a8af0; border-radius: 2px; background: #ececff; }
.mini { width: 14px; height: 14px; border-radius: 50%; background: radial-gradient(circle, #fff 4.5px, #0000 5px), conic-gradient(#ff0, #0f0, #0ff, #00f, #f0f, #f00, #ff0); }
.tdd { margin: 4px 0 0 25px; }
.wheelbox { height: 168px; padding: 2px 0 0 7px; }
.wheel { width: 166px; height: 166px; border: 1px solid #c4c4c4; border-radius: 50%; background: #fff; position: relative; display: grid; place-items: center; }
.ring { width: 160px; height: 160px; border-radius: 50%; background: conic-gradient(#ff0, #0f0, #0ff, #00f, #f0f, #f00, #ff0); display: grid; place-items: center; }
.hole { width: 130px; height: 130px; border-radius: 50%; background: radial-gradient(circle, #fafafa 62px, #bbb 62.500px, #bbb 63px, #fff 63.500px); display: grid; place-items: center; }
.sv { width: 86px; height: 86px; box-shadow: 0 0 0 1px #fff, 0 0 0 2px #ccc; background: linear-gradient(135deg, #0ff, #000 50%), linear-gradient(#f00, #000); background-blend-mode: screen; }
.hue { position: absolute; left: 15px; top: 41px; width: 9px; height: 9px; border: 2px solid #20c8e0; border-radius: 50%; }
.pick { position: absolute; left: 35px; top: 120px; width: 9px; height: 9px; border: 2px solid #000; border-radius: 50%; box-shadow: inset 0 0 0 1px #fff, 0 0 0 1px #fffc; }
.swatches { margin: 4px 0 0 2px; width: 177px; height: 94px; border: 1px solid #999; border-radius: 2px; display: flex; padding: 1px 0 1px 1px; background: #fff; }
.grid { width: 156px; height: 90px; background: linear-gradient(to right, #fff 1px, #0000 1px) 12px 0 / 13px 13px, linear-gradient(#fff 1px, #0000 1px) 0 12px / 13px 13px, repeating-conic-gradient(#e2e2e2 0 25%, #f1f1f1 0 50%) 0 0 / 13px 13px; }
.swatches .vbar { width: 17px; margin-left: 1px; }
.swth { width: 15px; height: 28px; margin-top: 1px; }
.toolrow { height: 54px; display: flex; justify-content: space-between; padding: 6px 6px 0 3px; }
.tools { display: grid; grid-template-columns: repeat(5, 22px); grid-auto-rows: 22px; }
.tools span { width: 22px; height: 22px; border: 1px solid #eee; }
.tools span svg { margin: -1px; }
.tools .on { border-color: #8080f0; background: #e0e0ff; border-radius: 2px; width: 21px; height: 21px; }
.colors { width: 44px; height: 46px; position: relative; margin-top: -2px; }
.fg, .bg { position: absolute; width: 28px; height: 28px; border: 1px solid #666; }
.fg { left: 0; top: 0; background: #000; box-shadow: inset 0 0 0 1px #fff; }
.bg { left: 16px; top: 16px; background: #fff; }
.swap { position: absolute; left: 31px; top: 2px; }
.trans { position: absolute; left: 1px; top: 33px; }
.brushes { margin-left: 1px; width: 178px; height: 99px; border: 1px solid #999; border-radius: 2px; display: flex; background: #fafafa; overflow: hidden; padding-left: 1px; }
.bgrid { display: grid; grid-template-columns: repeat(4, 40px); grid-auto-rows: 32px; padding-top: 1px; }
.brush { border-right: 1px solid #ddd; border-bottom: 1px solid #ddd; padding: 1px 0 0 1px; font-size: 9.500px; line-height: 12px; position: relative; background: #fcfcfc; }
.bl { height: 12px; }
.brush > svg { position: absolute; right: 0; bottom: 0; }
.brush.none { background: #eee; }
.brushes .vbar { width: 15px; padding: 1px 0; }
.brth { width: 15px; height: 7px; margin-top: 1px; background: #ccc; border-radius: 3px; }
.g2 { width: 180px; }
.opts { padding-left: 1px; }
.check.big { height: 18px; margin-top: -1px; }
.dlabel { height: 14px; margin: 5px 0 0 -1px; padding-top: 1px; }
.drag { width: 132px; height: 16px; border: 1px solid #999; border-radius: 2px; background: #fff; padding: 1px 3px 1px 1px; display: flex; justify-content: space-between; align-items: center; }
.drag span { padding-top: 2px; }
.drag b { width: 64px; height: 12px; background: #bbb; }
.radio { height: 19px; color: #aaa; }
.radio i { border-color: #bbb; margin-top: 0; }
.drag + .radio { margin-top: 4px; }
.okrow { display: flex; gap: 2px; margin-top: 7px; }
.okrow span { width: 68px; height: 21px; border: 2px solid #c8c8c8; background: #e0e0e0; color: #fff; font-weight: bold; text-align: center; line-height: 19px; }
em { font-style: normal; display: inline-block; }
.hq { margin-top: 6px; }

.bar { height: 24px; display: flex; align-items: center; padding-top: 2px; }
.m2 { margin-left: 2px; }
.m3 { margin-left: 3px; }
.m8 { margin-left: 8px; }
.selchk { display: flex; gap: 3px; margin-left: 5px; width: 69px; color: #aaa; align-items: center; }
.selchk span { padding-top: 2px; }
.bar .combo { height: 19px; }
.bar .c1 { width: 70px; }
.bar .c2 { width: 64px; margin-left: 8px; }
.bar .c3 { width: 48px; margin-left: 4px; }
.normal { width: 39px; height: 18px; margin-left: 8px; border: 1px solid #ccc; color: #aaa; background: #fff; text-align: center; line-height: 17px; border-radius: 2px; }
.stab { width: 43px; margin-left: 7px; padding-top: 3px; }
.frame { width: 920px; height: 598px; border: 1px solid #a8a09a; border-radius: 2px; overflow: hidden; }
.view { height: 574px; border: 1px solid #ecc39b; border-right-color: #eee; border-bottom-color: #e0a878; display: grid; grid-template-columns: 900px 16px; grid-template-rows: 555px 17px; background: #e0e0e0; }
.canvas { background: #a0a0a0; border: 1px solid #b0a49c; border-right: 0; border-bottom: 0; position: relative; }
.cross { position: absolute; left: 5px; top: 276px; }
.view .vbar { width: 16px; }
.view .hbar { height: 17px; }
.sp1 { height: 173px; }
.vth { width: 15px; height: 176px; }
.sp2 { width: 266px; }
.hth { width: 335px; height: 15px; }
.dock { height: 24px; background: #a0a0a0; }

.status { height: 22px; flex: none; display: flex; align-items: center; padding: 2px 4px 0 917px; gap: 2px; }
.mem { width: 233px; }
.key { width: 16px; height: 16px; background: #dedede; border-radius: 2px; font-size: 8.500px; line-height: 16px; text-align: center; }
.taskbar { height: 28px; flex: none; background: #d4d0c8; box-shadow: inset 0 1px #d4d0c8, inset 0 2px #fff; display: flex; padding: 4px 2px 0; position: relative; }
.start { width: 52px; height: 22px; padding: 0 0 0 1px; display: flex; align-items: center; gap: 1px; background: #d4d0c8; border: 1px solid; border-color: #fff #404040 #404040 #fff; box-shadow: inset -1px -1px #808080; font: bold 11.500px "DejaVu Sans Condensed", "DejaVu Sans", sans-serif; font-stretch: condensed; color: #000; margin-right: 9px; }
.ql { width: 33.500px; height: 22px; display: grid; place-items: center; }
.task { width: 32px; height: 22px; margin-left: 1px; background: #fff; border: 1px solid; border-color: #404040 #fff #fff #404040; display: grid; place-items: center; }
.tray { margin-left: auto; width: 172px; height: 22px; border: 1px solid; border-color: #808080 #fff #fff #808080; display: flex; align-items: center; padding-left: 5px; }
.t2 { margin-left: 8px; }
.t3 { margin-left: 7px; }
.t4 { margin-left: 6px; }
.clock { margin-left: 7px; width: 41px; padding-top: 1px; }
.t5 { margin-left: 9px; width: 16px; position: relative; left: 7px; }
.watermark { position: absolute; left: 1037px; top: 607px; overflow: visible; }
.watermark text { font: 400 51px Roboto, "Liberation Sans", sans-serif; }
</style>
